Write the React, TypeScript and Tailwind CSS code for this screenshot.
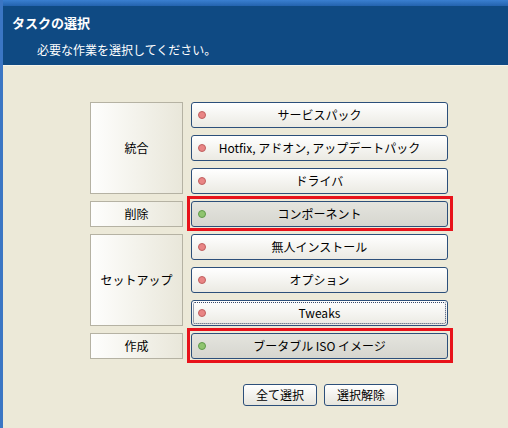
const font = { fontFamily: '"MS UI Gothic", "Noto Sans CJK JP", sans-serif' };

type Row = { label: string; on?: boolean; focus?: boolean };

function Dot({ on }: { on?: boolean }) {
  return (
    <span
      className={
        on
          ? "h-[8px] w-[8px] rounded-full border border-[#5f9a4a] bg-[#8fc46f]"
          : "h-[8px] w-[8px] rounded-full border border-[#c06060] bg-[#e98585]"
      }
    />
  );
}

function TaskButton({ label, on, focus }: Row) {
  return (
    <div
      className={
        on
          ? "relative flex h-[26px] items-center rounded-[3px] border border-[#2c4f7a] bg-gradient-to-b from-[#e4e4de] to-[#d6d6cf]"
          : "relative flex h-[26px] items-center rounded-[3px] border border-[#2c4f7a] bg-gradient-to-b from-[#ffffff] to-[#ebeae3]"
      }
    >
      {on && (
        <span className="pointer-events-none absolute -bottom-[5px] -left-[5px] -right-[6px] -top-[6px] border-[3px] border-[#e8121a]" />
      )}
      {focus && (
        <span className="pointer-events-none absolute inset-[1px] rounded-[2px] border border-dotted border-[#3a4a6a]" />
      )}
      <span className="absolute left-[6px] top-[8px] flex">
        <Dot on={on} />
      </span>
      <span className="w-full text-center text-[12px] text-black">{label}</span>
    </div>
  );
}

function Label({ text, span }: { text: string; span: string }) {
  return (
    <div
      className={`${span} flex items-center justify-center border border-[#b5b2a3] bg-gradient-to-r from-[#fefefd] to-[#e9e7da] text-[12px] text-black`}
    >
      {text}
    </div>
  );
}

const rows: Row[] = [
  { label: "サービスパック" },
  { label: "Hotfix, アドオン, アップデートパック" },
  { label: "ドライバ" },
  { label: "コンポーネント", on: true },
  { label: "無人インストール" },
  { label: "オプション" },
  { label: "Tweaks", focus: true },
  { label: "ブータブル ISO イメージ", on: true },
];

export default function App() {
  return (
    <div className="h-[428px] w-[508px] overflow-hidden bg-[#ece9d8]" style={font}>
      <div className="flex h-full border-l-[3px] border-[#3b76c4]">
        <div className="flex flex-1 flex-col">
          {/* header */}
          <div className="h-[66px] border-b border-[#f5f3ea] bg-[#0f4a83]">
            <div className="h-[6px] bg-gradient-to-b from-[#3a7fd0] to-[#2363ae]" />
            <div className="pl-[9px] pt-[7px] text-[13px] font-bold text-white">タスクの選択</div>
            <div className="pl-[34px] pt-[8px] text-[12px] text-white">必要な作業を選択してください。</div>
          </div>

          {/* tasks */}
          <div className="grid grid-cols-[93px_257px] grid-rows-[repeat(8,26px)] gap-x-[8px] gap-y-[7px] pl-[87px] pt-[36px]">
            <Label text="統合" span="col-start-1 row-start-1 row-span-3" />
            <Label text="削除" span="col-start-1 row-start-4" />
            <Label text="セットアップ" span="col-start-1 row-start-5 row-span-3" />
            <Label text="作成" span="col-start-1 row-start-8" />
            {rows.map((r, i) => (
              <div key={i} className="col-start-2" style={{ gridRowStart: i + 1 }}>
                <TaskButton {...r} />
              </div>
            ))}
          </div>

          {/* bottom buttons */}
          <div className="flex gap-[7px] pl-[240px] pt-[25px]">
            {["全て選択", "選択解除"].map((t) => (
              <button
                key={t}
                className="h-[22px] w-[74px] rounded-[3px] border border-[#2c4f7a] bg-gradient-to-b from-[#ffffff] to-[#e6e5dd] text-[12px] text-black"
              >
                {t}
              </button>
            ))}
          </div>
        </div>
      </div>
    </div>
  );
}
